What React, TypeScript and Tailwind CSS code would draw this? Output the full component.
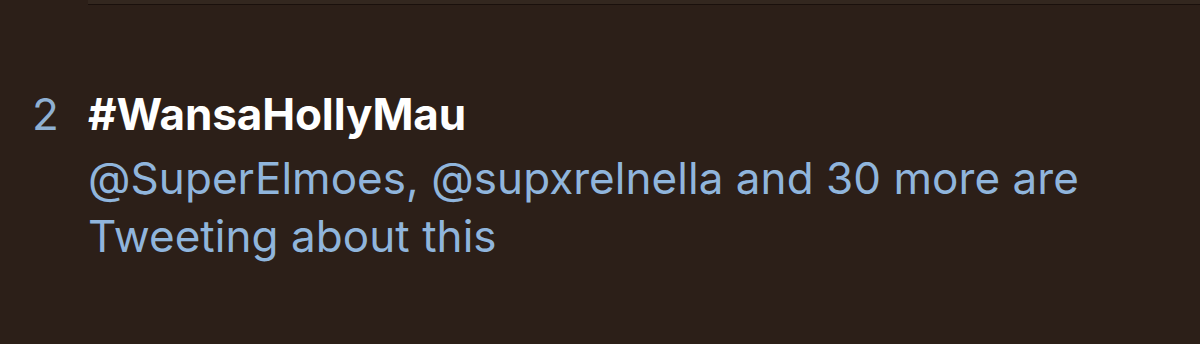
export default function App() {
  return (
    <div className="w-[1200px] h-[344px] bg-[#2c1f18] overflow-hidden font-['Inter','Liberation_Sans',sans-serif]">
      {/* top divider of previous row */}
      <div className="ml-[88px] h-[4px] bg-[#33271f]" />
      <div className="ml-[88px] h-[1px] bg-[#1a100c]" />

      <div className="flex pt-[80px]">
        <div className="w-[88px] pl-[32px] text-[44px] leading-[58px] text-[#8fb0d2]">2</div>
        <div className="flex-1">
          <div className="text-[44px] leading-[58px] font-bold tracking-[-0.1px] text-white">#WansaHollyMau</div>
          <div className="mt-[6px] text-[44px] leading-[58px] tracking-[0.05px] text-[#90b5dc]">
            @SuperElmoes, @supxrelnella and 30 more are
            <br />
            Tweeting about this
          </div>
        </div>
      </div>
    </div>
  );
}
